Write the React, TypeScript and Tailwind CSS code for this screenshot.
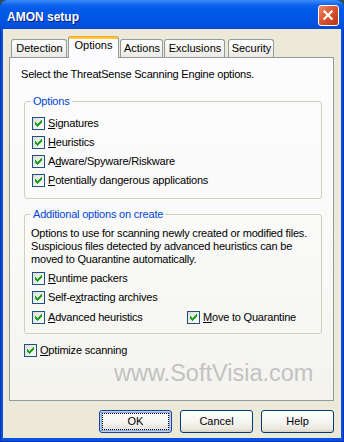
import React from "react";

function Check() {
  const px: [number, number, number][] = [
    [6, 0, 1], [5, 1, 2], [0, 2, 1], [4, 2, 3], [0, 3, 2], [3, 3, 3], [0, 4, 5], [1, 5, 3], [2, 6, 1],
  ];
  return (
    <span className="w-[13px] h-[13px] shrink-0 border border-[#1C5180] bg-[linear-gradient(135deg,#DCDCD7,#FFFFFF)] flex items-center justify-center">
      <svg width="7" height="7" viewBox="0 0 7 7" shapeRendering="crispEdges">
        {px.map(([x, y, w], i) => (
          <rect key={i} x={x} y={y} width={w} height={1} fill="#21A121" />
        ))}
      </svg>
    </span>
  );
}

function Row({ pre = "", u, post, className = "" }: { pre?: string; u: string; post: string; className?: string }) {
  return (
    <div className={"flex items-center h-[19px] gap-[3px] " + className}>
      <Check />
      <span className="whitespace-nowrap">
        {pre}
        <span className="underline underline-offset-[1px]">{u}</span>
        {post}
      </span>
    </div>
  );
}

function Tab({ label, w }: { label: string; w: string }) {
  return (
    <div
      className={
        "h-[18px] border border-b-0 border-[#919B9C] rounded-t-[3px] bg-[linear-gradient(to_bottom,#FFFFFF,#F3F3EF_60%,#EBEAE4)] pt-[2px] pl-[1px] text-center " +
        w
      }
    >
      {label}
    </div>
  );
}

function Btn({ label, def = false }: { label: string; def?: boolean }) {
  return (
    <button
      className={
        "w-[73px] h-[23px] rounded-[3px] border bg-[linear-gradient(to_bottom,#FFFFFF,#F5F4F0_55%,#E9E7DE_85%,#D8D2C6)] text-[11px] leading-[13px] text-black " +
        (def
          ? "border-[#1F3F8F] shadow-[inset_0_0_0_1px_#B9D1F6,inset_0_0_0_2px_#8CAEE6] outline outline-1 outline-dotted outline-black outline-offset-[-4px]"
          : "border-[#003C74]")
      }
    >
      {label}
    </button>
  );
}

export default function App() {
  return (
    <div className="w-[344px] h-[442px] bg-[#2f4f4a] font-['Liberation_Sans',Arial,sans-serif] text-[11px] leading-[13px] text-black">
      <div className="w-[344px] h-[442px] rounded-t-[8px] bg-[#0553E0] shadow-[inset_1px_0_#0A2FB5,inset_-1px_0_#0A2FB5,inset_0_-1px_#0A2FB5] flex flex-col overflow-hidden">
        {/* Title bar */}
        <div className="h-[29px] shrink-0 flex justify-between pl-[7px] pr-[5px] bg-[linear-gradient(to_bottom,#3D8EF8_0px,#2C7DF4_2px,#0F63EC_5px,#0059E8_10px,#0055E4_20px,#0050DC_26px,#0047D2_29px)]">
          <div className="mt-[10px] leading-[14px] text-[12px] font-bold text-white [text-shadow:1px_1px_#0A1A78]">
            AMON setup
          </div>
          <div className="mt-[5px] w-[21px] h-[21px] rounded-[3px] border border-white bg-[linear-gradient(135deg,#EE8769,#D9532E_50%,#B83312)] flex items-center justify-center">
            <svg width="21" height="21" viewBox="0 0 21 21">
              <path d="M6 6 L14 14 M14 6 L6 14" stroke="#FFFFFF" strokeWidth="2.4" strokeLinecap="square" />
            </svg>
          </div>
        </div>

        {/* Body */}
        <div className="mx-[3px] h-[409px] bg-[#ECE9D8] pl-[6px] flex flex-col">
          {/* Tabs */}
          <div className="mt-[7px] h-[21px] flex items-end gap-[1px] pl-[2px]">
            <Tab label="Detection" w="w-[56px]" />
            <div className="relative z-10 w-[51px] h-[22px] -mb-[1px] border-x border-[#919B9C] rounded-t-[3px] bg-[linear-gradient(to_bottom,#E68B2C_0px,#FFC73C_1px,#FFC73C_3px,#FCFCFE_3px)] pt-[3px] text-center">
              Options
            </div>
            <Tab label="Actions" w="w-[43px]" />
            <Tab label="Exclusions" w="w-[61px]" />
            <div className="w-[1px]" />
            <Tab label="Security" w="w-[46px]" />
          </div>

          {/* Panel */}
          <div className="w-[325px] h-[344px] border border-[#919B9C] bg-[linear-gradient(to_bottom,#FCFCFE,#F9F9F7_60%,#F4F3EE)] flex flex-col tracking-[-0.2px]">
            <div className="mt-[10px] pl-[11px] whitespace-nowrap">Select the ThreatSense Scanning Engine options.</div>

            <fieldset className="mt-[14px] ml-[14px] w-[298px] border border-[#D0D0BF] rounded-[3px] pl-[7px] pt-[6px] pb-[8px]">
              <legend className="ml-[-1px] px-[2px] text-[#0046D5]">Options</legend>
              <Row u="S" post="ignatures" />
              <Row u="H" post="euristics" />
              <Row pre="A" u="d" post="ware/Spyware/Riskware" />
              <Row u="P" post="otentially dangerous applications" />
            </fieldset>

            <fieldset className="mt-[9px] ml-[14px] w-[298px] border border-[#D0D0BF] rounded-[3px] pl-[7px] pt-[6px] pb-[6px]">
              <legend className="ml-[-1px] px-[2px] text-[#0046D5]">Additional options on create</legend>
              <p className="ml-[-1px] whitespace-nowrap">
                Options to use for scanning newly created or modified files.
                <br />
                Suspicious files detected by advanced heuristics can be
                <br />
                moved to Quarantine automatically.
              </p>
              <Row u="R" post="untime packers" className="mt-[3px]" />
              <Row pre="Self-e" u="x" post="tracting archives" />
              <div className="flex mt-[1px]">
                <Row u="A" post="dvanced heuristics" className="w-[155px]" />
                <Row u="M" post="ove to Quarantine" />
              </div>
            </fieldset>

            <Row u="O" post="ptimize scanning" className="mt-[7px] ml-[14px]" />

            <div className="ml-[104px] text-[23.5px] leading-[26px] tracking-normal text-[#C2C2C2] whitespace-nowrap">
              www.SoftVisia.com
            </div>
          </div>

          {/* Buttons */}
          <div className="mt-[9px] flex justify-end gap-[8px] pr-[7px]">
            <Btn label="OK" def />
            <Btn label="Cancel" />
            <Btn label="Help" />
          </div>
        </div>
      </div>
    </div>
  );
}
